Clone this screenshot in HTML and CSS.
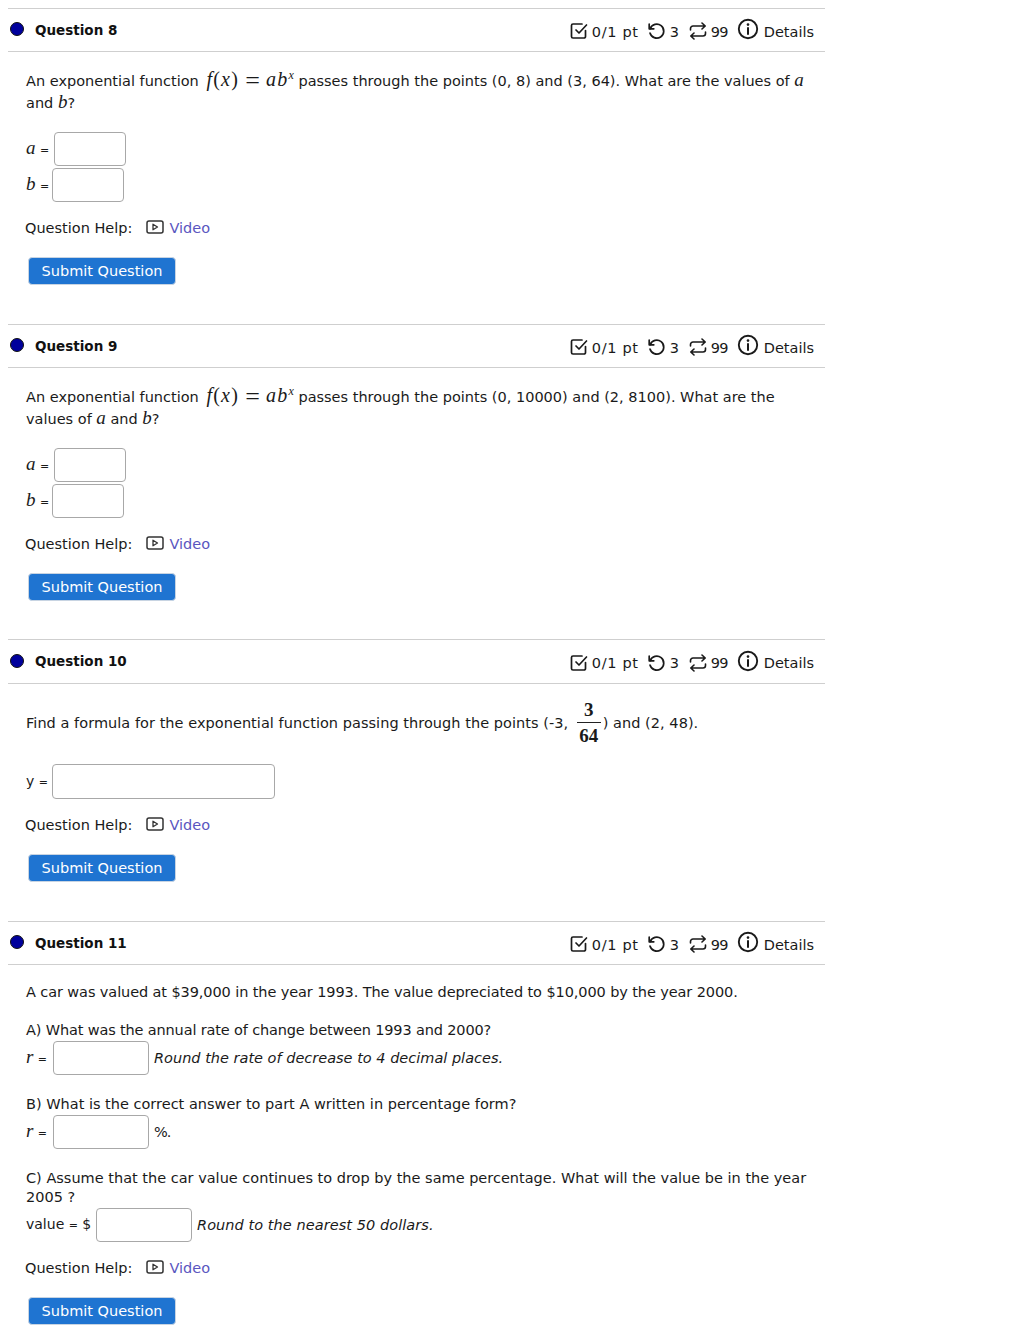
FILE: index.html
```html
<!DOCTYPE html>
<html lang="en">
<head>
<meta charset="utf-8">
<title>Questions</title>
<link rel="stylesheet" href="styles.css">
</head>
<body>
<svg class="defs" width="0" height="0" aria-hidden="true">
  <defs>
    <symbol id="i-check" viewBox="0 0 18 18"><path d="M15.5 8.5v6a1.5 1.5 0 0 1-1.5 1.5H3a1.5 1.5 0 0 1-1.5-1.5V3.5A1.5 1.5 0 0 1 3 2h9" fill="none" stroke="currentColor" stroke-width="1.7" stroke-linecap="round"/><path d="M6 8l3 3 7.5-8" fill="none" stroke="currentColor" stroke-width="1.7" stroke-linecap="round" stroke-linejoin="round"/></symbol>
    <symbol id="i-retry" viewBox="0 0 18 18"><path d="M3.2 6.6A7 7 0 1 1 3 11" fill="none" stroke="currentColor" stroke-width="1.7" stroke-linecap="round"/><path d="M2.2 2.2v4.6h4.6" fill="none" stroke="currentColor" stroke-width="1.7" stroke-linecap="round" stroke-linejoin="round"/></symbol>
    <symbol id="i-swap" viewBox="0 0 18 18"><path d="M1.5 8V6.5a2.5 2.5 0 0 1 2.5-2.5h12M13 1l3.2 3L13 7" fill="none" stroke="currentColor" stroke-width="1.6" stroke-linecap="round" stroke-linejoin="round"/><path d="M16.5 10v1.5a2.5 2.5 0 0 1-2.5 2.5H2M5 11l-3.2 3L5 17" fill="none" stroke="currentColor" stroke-width="1.6" stroke-linecap="round" stroke-linejoin="round"/></symbol>
    <symbol id="i-info" viewBox="0 0 22 22"><circle cx="11" cy="11" r="9.2" fill="none" stroke="currentColor" stroke-width="1.9"/><path d="M11 10v6" stroke="currentColor" stroke-width="2" stroke-linecap="round"/><circle cx="11" cy="6.6" r="1.3" fill="currentColor"/></symbol>
    <symbol id="i-video" viewBox="0 0 18 14"><rect x="1" y="1" width="16" height="12" rx="2" fill="none" stroke="currentColor" stroke-width="1.5"/><path d="M7 4.2v5.6L11.5 7z" fill="none" stroke="currentColor" stroke-width="1.3" stroke-linejoin="round"/></symbol>
  </defs>
</svg>

<section class="question q8">
  <header class="qhead">
    <h2 class="qtitle"><span class="dot"></span>Question 8</h2>
    <div class="meta">
      <svg class="ic"><use href="#i-check"/></svg><span class="m-pt">0/1 pt</span>
      <svg class="ic"><use href="#i-retry"/></svg><span class="m-3">3</span>
      <svg class="ic"><use href="#i-swap"/></svg><span class="m-99">99</span>
      <svg class="ic-info"><use href="#i-info"/></svg><span class="m-det">Details</span>
    </div>
  </header>
  <div class="qbody">
    <p class="text">An exponential function <span class="math"><i>f</i>(<i>x</i>) <span class="meq">=</span> <i>ab<sup>x</sup></i></span> passes through the points (0, 8) and (3, 64). What are the values of <i class="mv">a</i> and <i class="mv">b</i>?</p>
    <div class="row r-first"><span class="lab lab-a"><i class="mv">a</i> <span class="eq">=</span></span><span class="box w72"></span></div>
    <div class="row"><span class="lab lab-b"><i class="mv">b</i> <span class="eq">=</span></span><span class="box w72"></span></div>
    <div class="help">Question Help:<svg class="ic-video"><use href="#i-video"/></svg><a class="link">Video</a></div>
    <button class="submit" type="button">Submit Question</button>
  </div>
</section>

<section class="question q9">
  <header class="qhead">
    <h2 class="qtitle"><span class="dot"></span>Question 9</h2>
    <div class="meta">
      <svg class="ic"><use href="#i-check"/></svg><span class="m-pt">0/1 pt</span>
      <svg class="ic"><use href="#i-retry"/></svg><span class="m-3">3</span>
      <svg class="ic"><use href="#i-swap"/></svg><span class="m-99">99</span>
      <svg class="ic-info"><use href="#i-info"/></svg><span class="m-det">Details</span>
    </div>
  </header>
  <div class="qbody">
    <p class="text">An exponential function <span class="math"><i>f</i>(<i>x</i>) <span class="meq">=</span> <i>ab<sup>x</sup></i></span> passes through the points (0, 10000) and (2, 8100). What are the values of <i class="mv">a</i> and <i class="mv">b</i>?</p>
    <div class="row r-first"><span class="lab lab-a"><i class="mv">a</i> <span class="eq">=</span></span><span class="box w72"></span></div>
    <div class="row"><span class="lab lab-b"><i class="mv">b</i> <span class="eq">=</span></span><span class="box w72"></span></div>
    <div class="help">Question Help:<svg class="ic-video"><use href="#i-video"/></svg><a class="link">Video</a></div>
    <button class="submit" type="button">Submit Question</button>
  </div>
</section>

<section class="question q10">
  <header class="qhead">
    <h2 class="qtitle"><span class="dot"></span>Question 10</h2>
    <div class="meta">
      <svg class="ic"><use href="#i-check"/></svg><span class="m-pt">0/1 pt</span>
      <svg class="ic"><use href="#i-retry"/></svg><span class="m-3">3</span>
      <svg class="ic"><use href="#i-swap"/></svg><span class="m-99">99</span>
      <svg class="ic-info"><use href="#i-info"/></svg><span class="m-det">Details</span>
    </div>
  </header>
  <div class="qbody qbody-frac">
    <p class="text text-frac">Find a formula for the exponential function passing through the points (-3, <span class="frac"><span class="num">3</span><span class="den">64</span></span>) and (2, 48).</p>
    <div class="row r-y"><span class="lab lab-b">y <span class="eq">=</span></span><span class="box w223"></span></div>
    <div class="help help-y">Question Help:<svg class="ic-video"><use href="#i-video"/></svg><a class="link">Video</a></div>
    <button class="submit" type="button">Submit Question</button>
  </div>
</section>

<section class="question q11">
  <header class="qhead">
    <h2 class="qtitle"><span class="dot"></span>Question 11</h2>
    <div class="meta">
      <svg class="ic"><use href="#i-check"/></svg><span class="m-pt">0/1 pt</span>
      <svg class="ic"><use href="#i-retry"/></svg><span class="m-3">3</span>
      <svg class="ic"><use href="#i-swap"/></svg><span class="m-99">99</span>
      <svg class="ic-info"><use href="#i-info"/></svg><span class="m-det">Details</span>
    </div>
  </header>
  <div class="qbody qbody-car">
    <p class="text ls-car">A car was valued at $39,000 in the year 1993. The value depreciated to $10,000 by the year 2000.</p>
    <p class="text part ls-a">A) What was the annual rate of change between 1993 and 2000?</p>
    <div class="row r-part"><span class="lab lab-r"><i class="mv">r</i> <span class="eq">=</span></span><span class="box w96"></span><em class="hint">Round the rate of decrease to 4 decimal places.</em></div>
    <p class="text part-b">B) What is the correct answer to part A written in percentage form?</p>
    <div class="row r-part"><span class="lab lab-r"><i class="mv">r</i> <span class="eq">=</span></span><span class="box w96"></span><span class="hint pct">%.</span></div>
    <p class="text part-c">C) Assume that the car value continues to drop by the same percentage. What will the value be in the year 2005 ?</p>
    <div class="row r-val"><span class="lab lab-val">value <span class="eq">=</span> $</span><span class="box w96"></span><em class="hint ls-hint">Round to the nearest 50 dollars.</em></div>
    <div class="help help-y">Question Help:<svg class="ic-video"><use href="#i-video"/></svg><a class="link">Video</a></div>
    <button class="submit" type="button">Submit Question</button>
  </div>
</section>
</body>
</html>
```

FILE: styles.css
```css
html, body { margin: 0; padding: 0; background: #fff; }
body {
  padding: 8px 193px 0 8px;
  font-family: "DejaVu Sans", "Noto Sans", sans-serif;
  font-size: 14.5px;
  line-height: 21px;
  color: #1a1a1a;
  height: 1325px;
  overflow: hidden;
}
.defs { position: absolute; }

.question { display: block; }
.q8 { height: 316px; }
.q9 { height: 315px; }
.q10 { height: 282px; }

.qhead {
  display: flex;
  justify-content: space-between;
  align-items: center;
  height: 42px;
  border-top: 1px solid #cfcfcf;
  border-bottom: 1px solid #cfcfcf;
}
.q10 .qhead { height: 43px; }

.qtitle {
  margin: 0;
  display: flex;
  align-items: center;
  font-size: 13.5px;
  font-weight: 700;
  color: #111;
}
.dot {
  width: 12px;
  height: 12px;
  margin: 0 11px 0 2px;
  border-radius: 50%;
  background: #00009c;
  border: 1px solid #111;
  position: relative;
  top: -1px;
}
.meta {
  display: flex;
  align-items: center;
  padding-right: 11px;
  color: #1a1a1a;
  position: relative;
  top: 1px;
}
.meta span { padding-top: 2px; white-space: pre; }
.ic { width: 18px; height: 18px; }
.ic-info { width: 22px; height: 22px; margin: -4px 5px 0 9px; }
.m-pt { width: 46px; margin: 0 9px 0 4px; letter-spacing: 0.7px; }
.m-3 { width: 9px; margin: 0 10px 0 5px; }
.m-99 { width: 17px; margin-left: 4px; letter-spacing: -0.8px; }

.qbody { padding: 17px 0 0 18px; }
.text { margin: 0; width: 790px; }
.math {
  font-family: "Liberation Serif", serif;
  font-size: 20px;
  line-height: 1;
  letter-spacing: 1.2px;
  margin-left: 3px;
}
.meq { font-size: 26px; line-height: 0; letter-spacing: 0; vertical-align: -3px; }
.math sup { font-size: 12px; line-height: 0; vertical-align: 7px; letter-spacing: 0; }
.mv { font-family: "Liberation Serif", serif; font-size: 19px; line-height: 1; }

.row { display: flex; align-items: center; height: 36px; white-space: pre; }
.r-first { margin-top: 17px; }
.lab { display: block; font-size: 14px; }
.eq { font-size: 11px; }
.lab-a { width: 28px; }
.lab-b { width: 26px; }
.lab-r { width: 27px; }
.lab-val { width: 70px; }
.box {
  display: block;
  box-sizing: border-box;
  border: 1px solid #a8a8a8;
  border-radius: 4px;
  background: #fff;
}
.w72 { width: 72px; height: 34px; }
.w96 { width: 96px; height: 34px; }
.w223 { width: 223px; height: 35px; }

.help {
  display: flex;
  align-items: center;
  margin: 15px 0 0 -1px;
  white-space: pre;
}
.ic-video { width: 18px; height: 14px; margin: -3px 5px 0 14px; color: #333; }
.link { color: #5a56c0; }

.submit {
  display: block;
  margin: 18px 0 0 2px;
  width: 148px;
  height: 28px;
  padding: 0;
  font: inherit;
  color: #fff;
  background: #1f74d1;
  border: 1px solid #c8d4e2;
  border-radius: 4px;
}

.qbody-frac { padding-top: 15px; }
.text-frac { display: flex; align-items: center; white-space: pre; height: 48px; letter-spacing: 0.04px; }
.frac {
  display: inline-flex;
  flex-direction: column;
  align-items: center;
  font-family: "Liberation Serif", serif;
  font-size: 19px;
  font-weight: bold;
  line-height: 25px;
  margin: -1px 2px 0 4px;
  width: 24px;
}
.num { border-bottom: 1px solid #222; width: 100%; text-align: center; }
.den { width: 100%; text-align: center; }
.r-y { margin-top: 17px; height: 35px; }
.help-y { margin-top: 16px; }

.qbody-car { padding-top: 17px; }
.ls-car { letter-spacing: -0.1px; }
.ls-a { letter-spacing: -0.15px; }
.part { margin-top: 17px; }
.part-b { margin-top: 19px; }
.part-c { margin-top: 20px; line-height: 19px; }
.r-part { height: 34px; }
.r-val { margin-top: 1px; height: 34px; }
.hint { margin-left: 5px; }
.ls-hint { letter-spacing: 0.06px; }
.pct { letter-spacing: -1px; }
```
